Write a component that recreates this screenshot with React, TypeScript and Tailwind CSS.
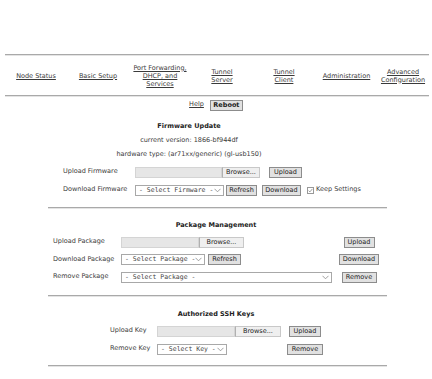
import React from "react";

const navItems = [
  { label: ["Node Status"], w: "w-[62px]" },
  { label: ["Basic Setup"], w: "w-[62px]" },
  { label: ["Port Forwarding,", "DHCP, and", "Services"], w: "w-[62px]" },
  { label: ["Tunnel", "Server"], w: "w-[62px]" },
  { label: ["Tunnel", "Client"], w: "w-[62px]" },
  { label: ["Administration"], w: "w-[63px]" },
  { label: ["Advanced", "Configuration"], w: "w-[50px]" },
];

function Btn({ children, className = "" }: { children: React.ReactNode; className?: string }) {
  return (
    <div
      className={`h-[11px] flex items-center justify-center whitespace-nowrap border border-[#8c8c8c] bg-[#e1e1e1] text-[#222] leading-none ${className}`}
    >
      {children}
    </div>
  );
}

function FileInput({ field, browse }: { field: string; browse: string }) {
  return (
    <div className="flex h-[11px]">
      <div className={`${field} h-full bg-[#e6e6e6] border border-[#d4d4d4]`} />
      <div
        className={`${browse} h-full flex items-center justify-center whitespace-nowrap bg-[#efefef] border border-[#c8c8c8] border-l-[#b0b0b0] text-[#222] leading-none`}
      >
        Browse...
      </div>
    </div>
  );
}

function Select({ text, w }: { text: string; w: string }) {
  return (
    <div
      className={`${w} h-[11px] flex items-center justify-between overflow-hidden border border-[#a8a8a8] bg-white pl-[3px] pr-[2px] font-['DejaVu_Sans_Mono',monospace] text-[6.5px] text-[#444] leading-none`}
    >
      <span className="whitespace-nowrap">{text}</span>
      <svg width="7" height="5" viewBox="0 0 7 5" className="shrink-0">
        <path d="M0.5 0.8 L3.5 3.8 L6.5 0.8" fill="none" stroke="#888" strokeWidth="0.8" />
      </svg>
    </div>
  );
}

function Hr({ className = "" }: { className?: string }) {
  return <div className={`h-[2px] border-t border-[#a9a9a9] border-b border-b-[#e4e4e4] ${className}`} />;
}

export default function App() {
  return (
    <div className="w-[432px] h-[379px] overflow-hidden bg-white font-['DejaVu_Sans',Verdana,sans-serif] text-[6.5px] text-[#3a3a3a]">
      <div className="h-[54px]" />
      <Hr className="ml-[5px] w-[424px]" />

      {/* nav */}
      <div className="h-[39px] flex items-center ml-[5px]">
        {navItems.map((n) => (
          <div key={n.label.join(" ")} className={`${n.w} flex flex-col items-center text-center leading-[8px]`}>
            {n.label.map((l) => (
              <span key={l} className="underline whitespace-nowrap">
                {l}
              </span>
            ))}
          </div>
        ))}
      </div>
      <Hr className="ml-[5px] w-[424px]" />

      {/* help / reboot */}
      <div className="h-[16px] flex items-center justify-center gap-[6px]">
        <span className="underline">Help</span>
        <Btn className="w-[33px] h-[10px] font-bold">Reboot</Btn>
      </div>

      {/* firmware */}
      <div className="mt-[7px] ml-[60px] w-[258px] flex flex-col items-center">
        <div className="h-[14px] flex items-center font-bold text-[#222]">Firmware Update</div>
        <div className="h-[14px] flex items-center">current version: 1866-bf944df</div>
        <div className="h-[14px] flex items-center">hardware type: (ar71xx/generic) (gl-usb150)</div>
      </div>
      <div className="mt-[1px] h-[18px] flex items-center pl-[63px]">
        <div className="w-[72px]">Upload Firmware</div>
        <FileInput field="w-[87px]" browse="w-[38px]" />
        <div className="w-[51px] flex justify-center">
          <Btn className="w-[33px]">Upload</Btn>
        </div>
      </div>
      <div className="h-[18px] flex items-center pl-[63px]">
        <div className="w-[72px]">Download Firmware</div>
        <Select text="- Select Firmware -" w="w-[89px]" />
        <Btn className="w-[31px] ml-[2px]">Refresh</Btn>
        <div className="w-[49px] flex justify-center">
          <Btn className="w-[39px]">Download</Btn>
        </div>
        <div className="flex items-center gap-[2px] ml-[1px]">
          <svg width="7" height="7" viewBox="0 0 7 7">
            <rect x="0.5" y="0.5" width="6" height="6" fill="#fff" stroke="#999" />
            <path d="M1.6 3.6 L2.9 4.9 L5.4 1.9" fill="none" stroke="#777" strokeWidth="0.7" />
          </svg>
          <span>Keep Settings</span>
        </div>
      </div>

      <Hr className="mt-[8px] ml-[48px] w-[339px]" />

      {/* packages */}
      <div className="mt-[10px] h-[14px] flex items-center justify-center font-bold text-[#222]">
        Package Management
      </div>
      <div className="h-[18px] flex items-center pl-[53px]">
        <div className="w-[68px]">Upload Package</div>
        <div className="w-[216px]">
          <FileInput field="w-[78px]" browse="w-[45px]" />
        </div>
        <div className="w-[44px] flex justify-center">
          <Btn className="w-[31px]">Upload</Btn>
        </div>
      </div>
      <div className="h-[17px] flex items-center pl-[53px]">
        <div className="w-[68px]">Download Package</div>
        <div className="w-[216px] flex items-center gap-[3px]">
          <Select text="- Select Package -" w="w-[84px]" />
          <Btn className="w-[33px]">Refresh</Btn>
        </div>
        <div className="w-[44px] flex justify-center">
          <Btn className="w-[40px]">Download</Btn>
        </div>
      </div>
      <div className="h-[18px] flex items-center pl-[53px]">
        <div className="w-[68px]">Remove Package</div>
        <div className="w-[216px]">
          <Select text="- Select Package -" w="w-[211px]" />
        </div>
        <div className="w-[44px] flex justify-center">
          <Btn className="w-[35px]">Remove</Btn>
        </div>
      </div>

      <Hr className="mt-[9px] ml-[48px] w-[339px]" />

      {/* ssh keys */}
      <div className="mt-[11px] h-[14px] flex items-center justify-center font-bold text-[#222]">
        Authorized SSH Keys
      </div>
      <div className="h-[18px] flex items-center pl-[110px]">
        <div className="w-[47px]">Upload Key</div>
        <div className="w-[126px]">
          <FileInput field="w-[78px]" browse="w-[46px]" />
        </div>
        <div className="w-[44px] flex justify-center">
          <Btn className="w-[32px]">Upload</Btn>
        </div>
      </div>
      <div className="h-[18px] flex items-center pl-[110px]">
        <div className="w-[47px]">Remove Key</div>
        <div className="w-[126px]">
          <Select text="- Select Key -" w="w-[70px]" />
        </div>
        <div className="w-[44px] flex justify-center">
          <Btn className="w-[36px]">Remove</Btn>
        </div>
      </div>

      <Hr className="mt-[7px] ml-[48px] w-[339px]" />
    </div>
  );
}
